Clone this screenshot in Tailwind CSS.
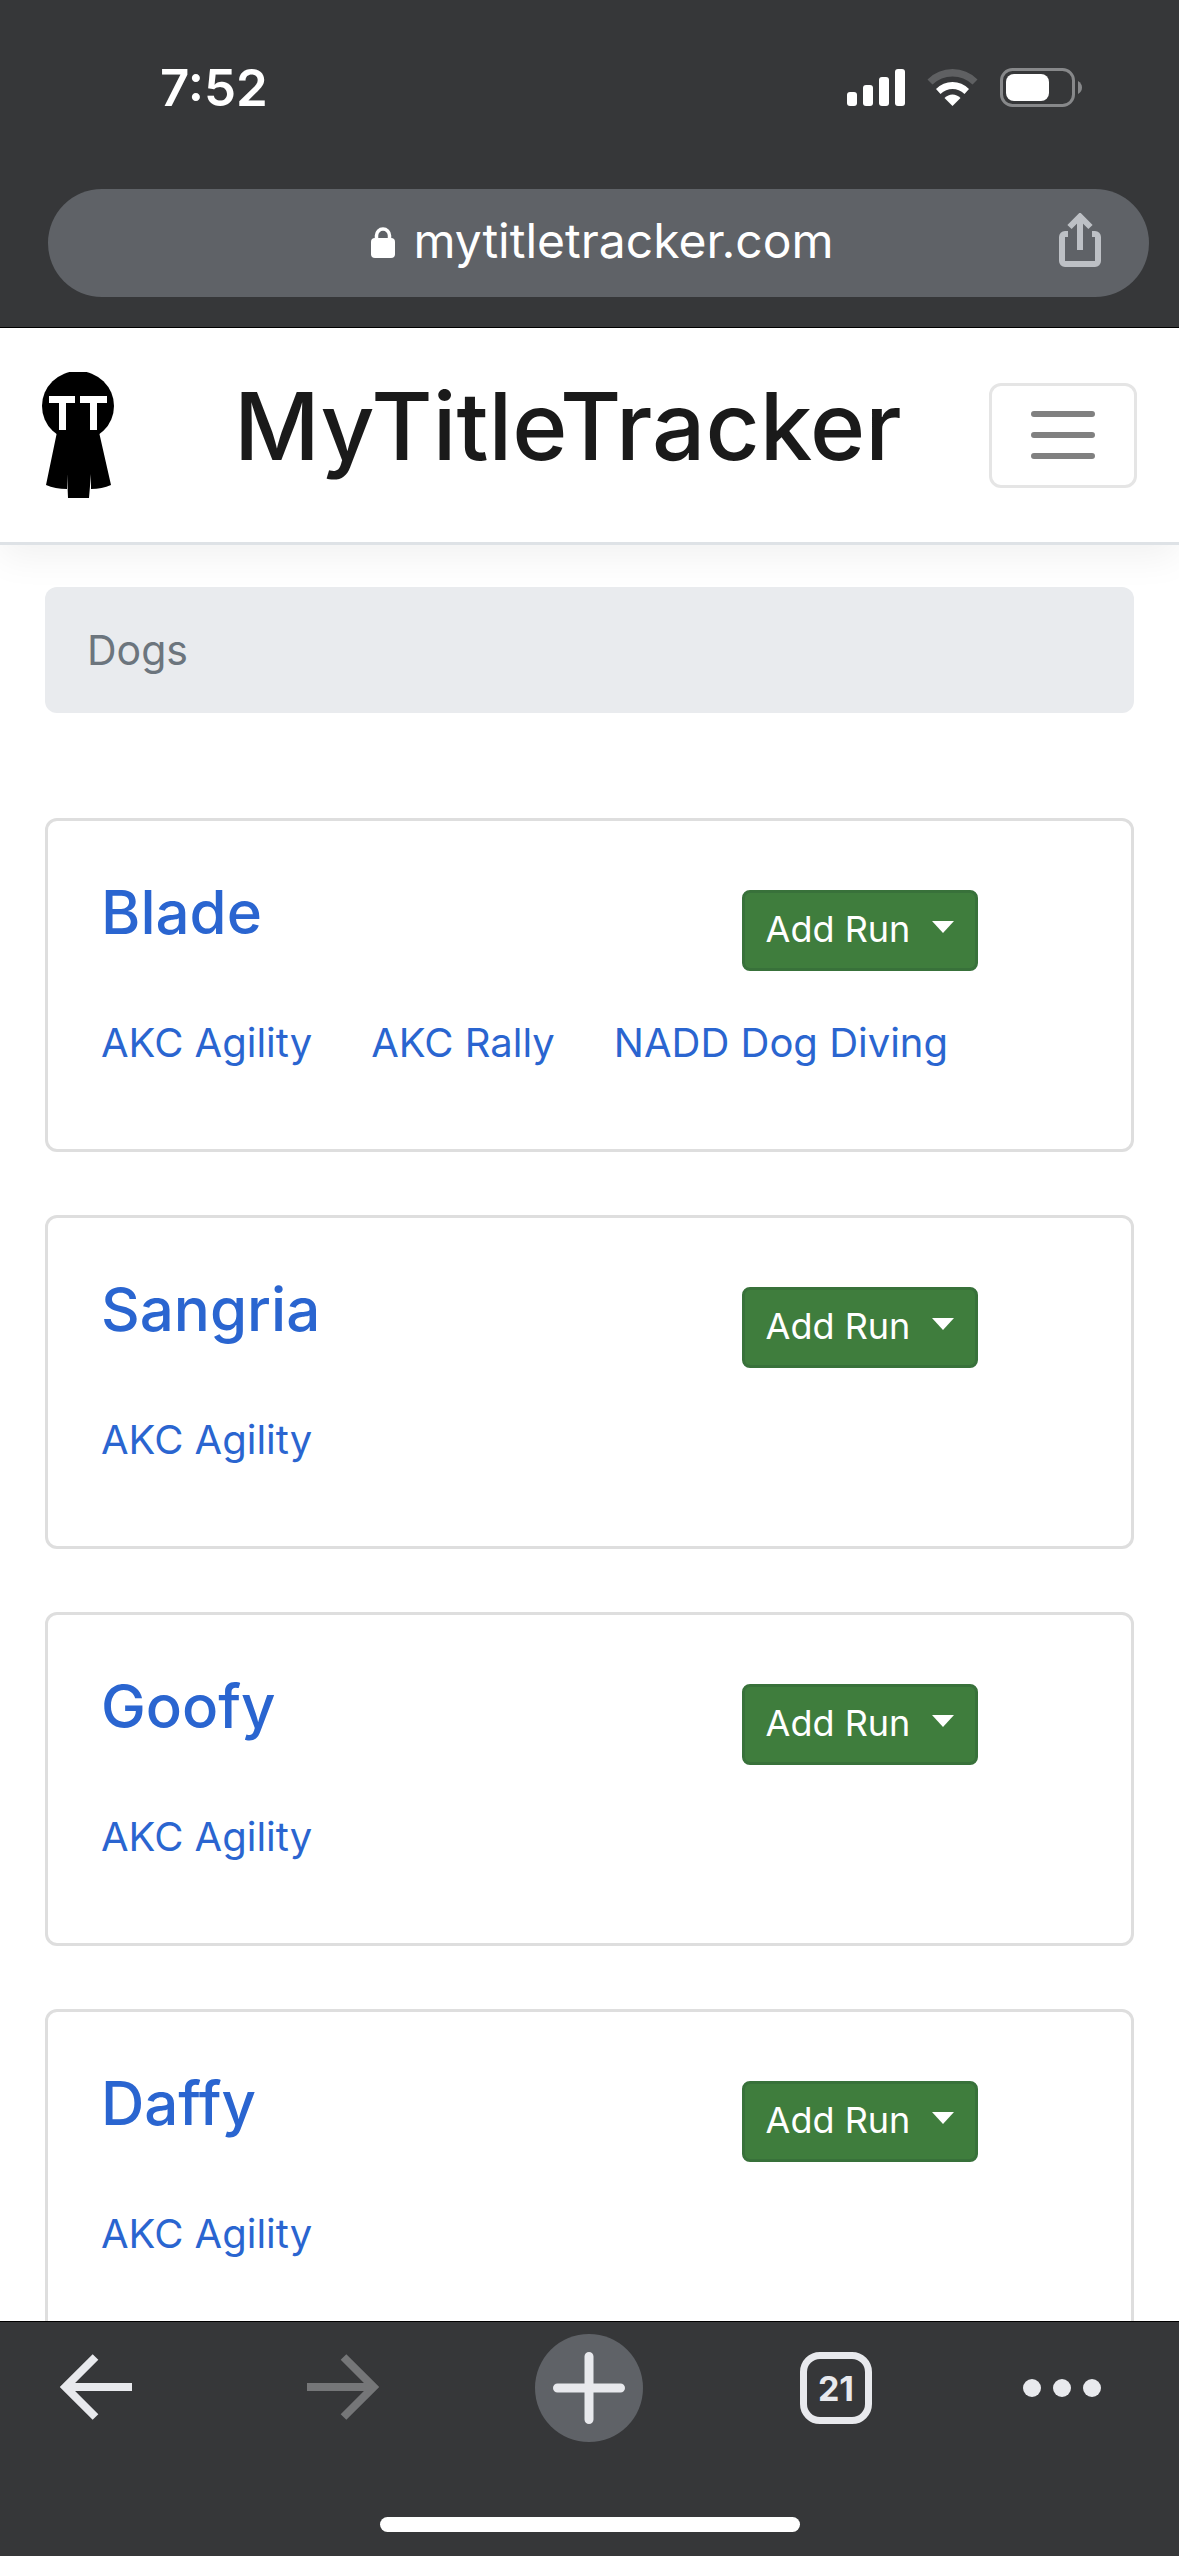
<!DOCTYPE html>
<html lang="en">
<head>
    <meta charset="UTF-8">
    <meta name="viewport" content="width=device-width, initial-scale=1.0">
    <title>MyTitleTracker</title>
    <script src="https://cdn.jsdelivr.net/npm/@tailwindcss/browser@4"></script>
</head>
<body class="flex flex-col h-screen overflow-hidden bg-white text-[#1a1a1a] font-['Inter',sans-serif]">

    <!-- Status bar and address bar -->
    <div class="shrink-0 bg-[#363739] border-b border-black pt-[50px] pb-[30px] text-white">
        <div class="flex items-center justify-between h-[75px] pl-40 pr-24">
            <div class="text-[51px] leading-[75px] font-semibold">7:52</div>
            <div class="flex items-center gap-[22px]">
                <svg class="w-[58px] h-[38px]" viewBox="0 0 58 38" fill="white">
                    <rect x="0" y="23" width="10" height="14" rx="3"/>
                    <rect x="16" y="16" width="10" height="21" rx="3"/>
                    <rect x="32" y="8" width="10" height="29" rx="3"/>
                    <rect x="48" y="0" width="10" height="37" rx="3"/>
                </svg>
                <svg class="w-[51px] h-[38px]" viewBox="0 0 51 38" fill="none">
                    <path d="M0.500 10.500Q11 0 25.500 0T50.500 10.500L45.500 15.500Q37 7.500 25.500 7.500T5.500 15.500Z" fill="#5f6062"/>
                    <path d="M9 20Q16 13 25.500 13T42 20L37.500 25Q32 20 25.500 20T13.500 25Z" fill="white"/>
                    <path d="M17.500 29Q21 25.500 25.500 25.500T33.500 29L25.500 37Z" fill="white"/>
                </svg>
                <svg class="w-[83px] h-[40px]" viewBox="0 0 83 40" fill="none">
                    <rect x="1.500" y="1.500" width="72" height="36" rx="11" stroke="#87888a" stroke-width="3"/>
                    <rect x="6" y="6" width="43" height="27" rx="8" fill="white"/>
                    <path d="M78 13Q82 15.500 82 19.500T78 26Z" fill="#87888a"/>
                </svg>
            </div>
        </div>
        <div class="flex items-center h-[108px] mt-16 ml-12 mr-[30px] pl-14 pr-12 rounded-full bg-[#5f6267]">
            <div class="flex-1"></div>
            <div class="flex items-center gap-[18px]">
                <svg class="w-[24px] h-[32px]" viewBox="0 0 24 32" fill="none">
                    <rect x="0" y="11" width="24" height="20" rx="4" fill="white"/>
                    <path d="M5.500 13V8.500a6.500 6.500 0 0 1 13 0V13" stroke="white" stroke-width="3.500"/>
                </svg>
                <div class="pb-1 text-[48px] leading-[60px]">mytitletracker.com</div>
            </div>
            <div class="flex-1 flex justify-end">
                <button aria-label="Share">
                    <svg class="w-[42px] h-[60px]" viewBox="0 0 42 60" fill="none" stroke="#bdc0c5" stroke-width="6">
                        <path d="M9 21H6a3 3 0 0 0-3 3V48a3 3 0 0 0 3 3H36a3 3 0 0 0 3-3V24a3 3 0 0 0-3-3H33"/>
                        <path d="M21 37V4M10.500 14L21 3.500L31.500 14"/>
                    </svg>
                </button>
            </div>
        </div>
    </div>

    <!-- Page -->
    <div class="flex-1 min-h-0 overflow-hidden">
        <nav class="flex items-center px-[42px] py-[44px] bg-white border-b-[3px] border-[#dee2e6] shadow-[0_12px_36px_rgba(0,0,0,0.06)]">
            <a href="#" aria-label="Home">
                <svg class="w-[72px] h-[126px]" viewBox="0 0 72 126">
                    <ellipse cx="36" cy="34" rx="36" ry="35" fill="black"/>
                    <path d="M15 60H57L69 113Q60 117 49 117V102L47 126H26L25 102V117Q13 117 4 113Z" fill="black"/>
                    <path d="M7 27.500H33M20.500 27V58M38 27.500H65M51.500 27V58" stroke="white" stroke-width="7" fill="none"/>
                </svg>
            </a>
            <h1 class="ml-[120px] mb-[18px] text-[94px] leading-[102px] font-medium">MyTitleTracker</h1>
            <button aria-label="Menu" class="ml-auto flex items-center justify-center w-[148px] h-[105px] border-[3px] border-[#e5e5e5] rounded-xl">
                <svg class="w-[64px] h-[48px]" viewBox="0 0 64 48" stroke="#808080" stroke-width="6" stroke-linecap="round">
                    <path d="M3 3H61M3 24H61M3 45H61"/>
                </svg>
            </button>
        </nav>

        <main class="px-[45px] pt-[42px]">
            <div class="px-[42px] py-8 rounded-xl bg-[#e9ebee] text-[41px] leading-[62px] text-[#6c757d]">Dogs</div>

            <div class="flex flex-col gap-[63px] mt-[105px] text-[#2a65d0]">
                <div class="border-[3px] border-[#dedede] rounded-xl pt-[54px] pb-[75px] pl-[53px]">
                    <div class="flex items-start justify-between pr-[153px]">
                        <h2 class="text-[60px] leading-[75px] font-medium"><a href="#">Blade</a></h2>
                        <button class="flex items-center justify-center gap-[22px] w-[236px] h-[81px] mt-[15px] pb-[3px] border-[3px] border-[#38713a] rounded-lg bg-[#3f7d3d] text-white text-[36px]">
                            Add Run
                            <svg class="w-[22px] h-[22px]" viewBox="0 0 22 22" fill="white"><path d="M0 3H22L11 15Z"/></svg>
                        </button>
                    </div>
                    <div class="flex gap-[59px] mt-10 text-[40px] leading-[63px]">
                        <a href="#">AKC Agility</a>
                        <a href="#">AKC Rally</a>
                        <a href="#">NADD Dog Diving</a>
                    </div>
                </div>

                <div class="border-[3px] border-[#dedede] rounded-xl pt-[54px] pb-[75px] pl-[53px]">
                    <div class="flex items-start justify-between pr-[153px]">
                        <h2 class="text-[60px] leading-[75px] font-medium"><a href="#">Sangria</a></h2>
                        <button class="flex items-center justify-center gap-[22px] w-[236px] h-[81px] mt-[15px] pb-[3px] border-[3px] border-[#38713a] rounded-lg bg-[#3f7d3d] text-white text-[36px]">
                            Add Run
                            <svg class="w-[22px] h-[22px]" viewBox="0 0 22 22" fill="white"><path d="M0 3H22L11 15Z"/></svg>
                        </button>
                    </div>
                    <div class="flex gap-[59px] mt-10 text-[40px] leading-[63px]">
                        <a href="#">AKC Agility</a>
                    </div>
                </div>

                <div class="border-[3px] border-[#dedede] rounded-xl pt-[54px] pb-[75px] pl-[53px]">
                    <div class="flex items-start justify-between pr-[153px]">
                        <h2 class="text-[60px] leading-[75px] font-medium"><a href="#">Goofy</a></h2>
                        <button class="flex items-center justify-center gap-[22px] w-[236px] h-[81px] mt-[15px] pb-[3px] border-[3px] border-[#38713a] rounded-lg bg-[#3f7d3d] text-white text-[36px]">
                            Add Run
                            <svg class="w-[22px] h-[22px]" viewBox="0 0 22 22" fill="white"><path d="M0 3H22L11 15Z"/></svg>
                        </button>
                    </div>
                    <div class="flex gap-[59px] mt-10 text-[40px] leading-[63px]">
                        <a href="#">AKC Agility</a>
                    </div>
                </div>

                <div class="border-[3px] border-[#dedede] rounded-xl pt-[54px] pb-[75px] pl-[53px]">
                    <div class="flex items-start justify-between pr-[153px]">
                        <h2 class="text-[60px] leading-[75px] font-medium"><a href="#">Daffy</a></h2>
                        <button class="flex items-center justify-center gap-[22px] w-[236px] h-[81px] mt-[15px] pb-[3px] border-[3px] border-[#38713a] rounded-lg bg-[#3f7d3d] text-white text-[36px]">
                            Add Run
                            <svg class="w-[22px] h-[22px]" viewBox="0 0 22 22" fill="white"><path d="M0 3H22L11 15Z"/></svg>
                        </button>
                    </div>
                    <div class="flex gap-[59px] mt-10 text-[40px] leading-[63px]">
                        <a href="#">AKC Agility</a>
                    </div>
                </div>
            </div>
        </main>
    </div>

    <!-- Browser toolbar -->
    <div class="shrink-0 bg-[#363739] border-t border-black pt-3 pb-6 text-[#e8e9ed]">
        <div class="flex items-center justify-between pl-[60px] pr-[78px]">
            <button aria-label="Back" class="w-[90px]">
                <svg class="w-[72px] h-[72px]" viewBox="0 0 72 72" fill="none" stroke="currentColor" stroke-width="8">
                    <path d="M72 35H8M35.500 5L5.500 35L35.500 65"/>
                </svg>
            </button>
            <button aria-label="Forward" class="text-[#757678]" disabled>
                <svg class="w-[72px] h-[72px]" viewBox="0 0 72 72" fill="none" stroke="currentColor" stroke-width="8">
                    <path d="M0 35H64M36.500 5L66.500 35L36.500 65"/>
                </svg>
            </button>
            <button aria-label="New tab" class="flex items-center justify-center w-[108px] h-[108px] rounded-full bg-[#5f6267]">
                <svg class="w-[72px] h-[72px]" viewBox="0 0 72 72" stroke="currentColor" stroke-width="9" stroke-linecap="round">
                    <path d="M4.500 36H67.500M36 4.500V67.500"/>
                </svg>
            </button>
            <div class="flex items-center gap-[151px]">
                <button aria-label="Tabs" class="flex items-center justify-center w-[72px] h-[72px] border-[7px] border-current rounded-[20px] text-[34px] font-bold">21</button>
                <button aria-label="More">
                    <svg class="w-[78px] h-[18px]" viewBox="0 0 78 18" fill="currentColor">
                        <circle cx="9" cy="9" r="9"/>
                        <circle cx="39" cy="9" r="9"/>
                        <circle cx="69" cy="9" r="9"/>
                    </svg>
                </button>
            </div>
        </div>
        <div class="w-[420px] h-[15px] mx-auto mt-[75px] rounded-full bg-white"></div>
    </div>
</body>
</html>
